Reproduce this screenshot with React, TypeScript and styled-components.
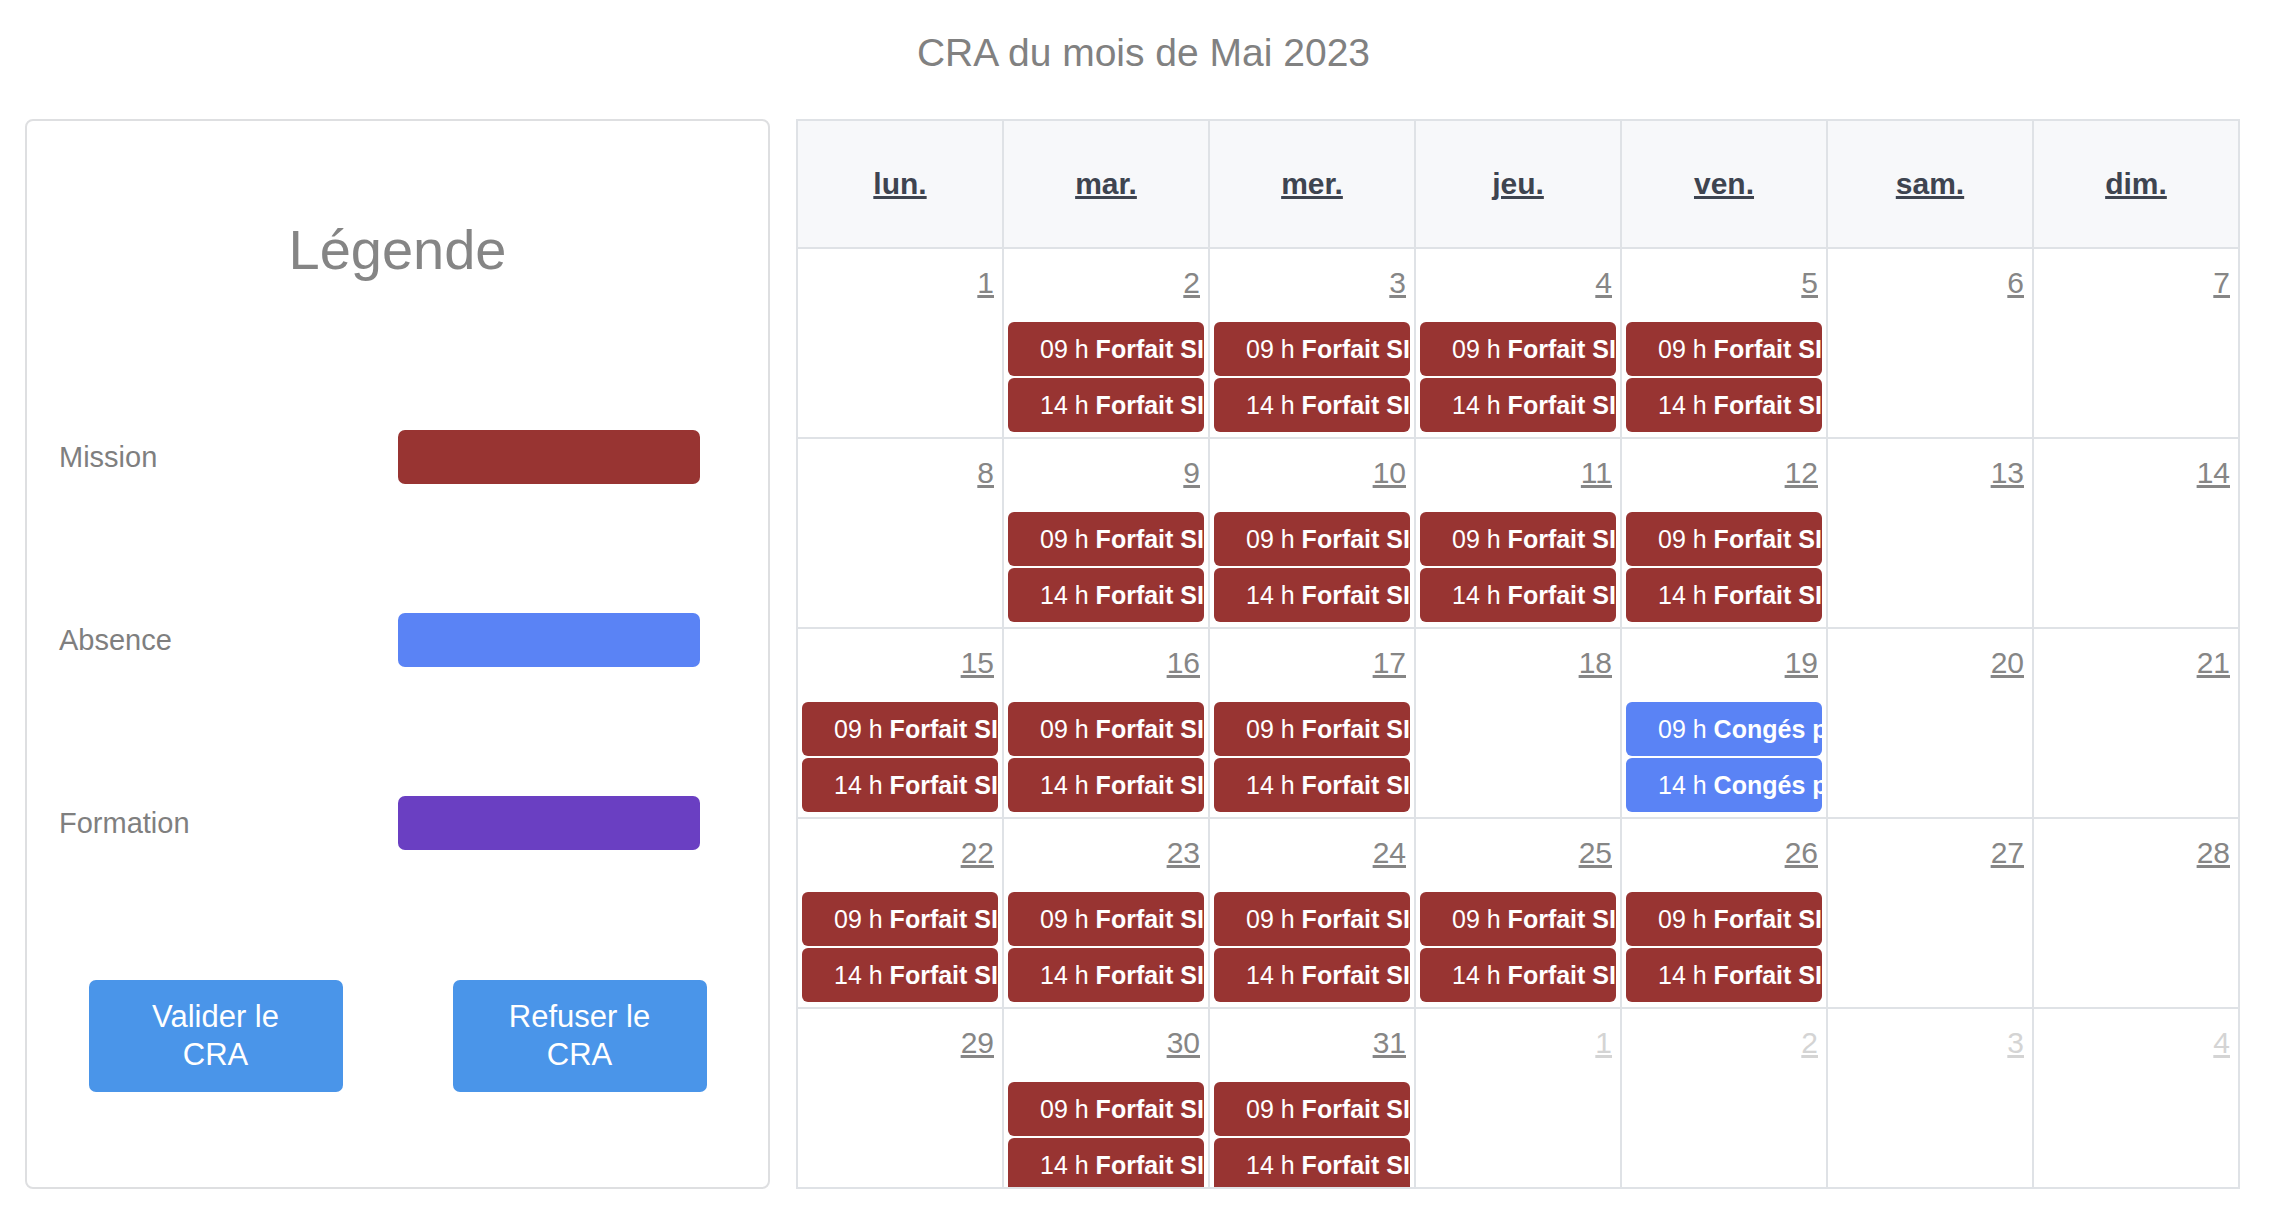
import React from 'react';
import styled, { createGlobalStyle } from 'styled-components';

const GlobalStyle = createGlobalStyle`
  html, body {
    margin: 0;
    padding: 0;
    background: #ffffff;
  }
  body {
    font-family: "Liberation Sans", Arial, Helvetica, sans-serif;
  }
`;

const Page = styled.div`
  width: 2274px;
  box-sizing: border-box;
  padding: 29px 34px 0 25px;
`;

const Title = styled.h1`
  margin: 0;
  padding-left: 22px;
  text-align: center;
  font-size: 39px;
  line-height: 47px;
  font-weight: 400;
  color: #818181;
`;

const Main = styled.div`
  display: flex;
  gap: 26px;
  margin-top: 43px;
  height: 1070px;
`;

const LegendPanel = styled.section`
  width: 745px;
  flex: none;
  box-sizing: border-box;
  border: 2px solid #dedfe1;
  border-radius: 8px;
  padding: 0 32px;
  display: flex;
  flex-direction: column;
`;

const LegendTitle = styled.h2`
  margin: 95px 0 0;
  text-align: center;
  font-size: 56px;
  line-height: 67px;
  font-weight: 400;
  color: #858585;
`;

const LegendList = styled.div`
  display: grid;
  grid-template-columns: 1fr 1fr;
  row-gap: 129px;
  margin-top: 147px;
`;

const LegendLabel = styled.span`
  align-self: center;
  font-size: 29px;
  color: #7f7f7f;
`;

const Swatch = styled.div<{ $color: string }>`
  width: 302px;
  height: 54px;
  border-radius: 7px;
  background: ${(p) => p.$color};
`;

const ButtonRow = styled.div`
  display: flex;
  justify-content: center;
  gap: 110px;
  margin-top: 130px;
`;

const ActionButton = styled.button`
  width: 254px;
  height: 112px;
  box-sizing: border-box;
  padding: 0 40px;
  border: none;
  border-radius: 7px;
  background: #4a95e9;
  color: #ffffff;
  font-family: "Liberation Sans", Arial, sans-serif;
  font-size: 31px;
  line-height: 38px;
  cursor: pointer;
`;

const CalendarFrame = styled.section`
  flex: 1;
  box-sizing: border-box;
  border-left: 2px solid #dfe2e6;
  border-top: 2px solid #dfe2e6;
  border-bottom: 2px solid #dfe2e6;
  overflow: hidden;
`;

const CalendarGrid = styled.div`
  display: grid;
  grid-template-columns: repeat(7, 1fr);
  grid-template-rows: 128px;
  grid-auto-rows: 190px;
`;

const HeaderCell = styled.div`
  box-sizing: border-box;
  background: #f7f8fa;
  border-right: 2px solid #dfe2e6;
  border-bottom: 2px solid #dfe2e6;
  display: flex;
  align-items: center;
  justify-content: center;
`;

const HeaderLink = styled.a`
  font-size: 30px;
  font-weight: 700;
  color: #3e4450;
  text-decoration: underline;
`;

const DayCell = styled.div`
  box-sizing: border-box;
  border-right: 2px solid #dfe2e6;
  border-bottom: 2px solid #dfe2e6;
  padding: 16px 4px 0;
  display: flex;
  flex-direction: column;
  min-width: 0;
`;

const DayNumber = styled.a<{ $muted?: boolean }>`
  align-self: flex-end;
  margin-right: 4px;
  font-size: 30px;
  line-height: 36px;
  color: ${(p) => (p.$muted ? '#d4d4d4' : '#868686')};
  text-decoration: underline;
`;

const EventList = styled.div`
  display: flex;
  flex-direction: column;
  gap: 2px;
  margin-top: 21px;
`;

const EventChip = styled.div<{ $color: string }>`
  height: 54px;
  box-sizing: border-box;
  padding-left: 32px;
  border-radius: 6px;
  background: ${(p) => p.$color};
  color: #ffffff;
  font-size: 25px;
  line-height: 54px;
  white-space: nowrap;
  overflow: hidden;
`;

const EventTitle = styled.b`
  font-weight: 700;
`;

const MISSION = '#983432';
const ABSENCE = '#5a83f5';
const FORMATION = '#6a3fc2';

type Kind = 'mission' | 'absence' | null;

interface Day {
  n: number;
  muted?: boolean;
  kind: Kind;
}

const missionDays = new Set([2, 3, 4, 5, 9, 10, 11, 12, 15, 16, 17, 22, 23, 24, 25, 26, 30, 31]);

const days: Day[] = [];
for (let d = 1; d <= 31; d++) {
  days.push({ n: d, kind: missionDays.has(d) ? 'mission' : d === 19 ? 'absence' : null });
}
for (let d = 1; d <= 4; d++) {
  days.push({ n: d, muted: true, kind: null });
}

const weekdays = ['lun.', 'mar.', 'mer.', 'jeu.', 'ven.', 'sam.', 'dim.'];

const legend = [
  { label: 'Mission', color: MISSION },
  { label: 'Absence', color: ABSENCE },
  { label: 'Formation', color: FORMATION },
];

function DayEvents({ kind }: { kind: Kind }) {
  if (!kind) return null;
  const color = kind === 'mission' ? MISSION : ABSENCE;
  const title = kind === 'mission' ? 'Forfait SIRH' : 'Congés payés';
  return (
    <EventList>
      {['09', '14'].map((h) => (
        <EventChip key={h} $color={color}>
          {h} h <EventTitle>{title}</EventTitle>
        </EventChip>
      ))}
    </EventList>
  );
}

export default function App() {
  return (
    <>
      <GlobalStyle />
      <Page>
        <Title>CRA du mois de Mai 2023</Title>
        <Main>
          <LegendPanel>
            <LegendTitle>Légende</LegendTitle>
            <LegendList>
              {legend.map((l) => (
                <React.Fragment key={l.label}>
                  <LegendLabel>{l.label}</LegendLabel>
                  <Swatch $color={l.color} />
                </React.Fragment>
              ))}
            </LegendList>
            <ButtonRow>
              <ActionButton>Valider le CRA</ActionButton>
              <ActionButton>Refuser le CRA</ActionButton>
            </ButtonRow>
          </LegendPanel>
          <CalendarFrame>
            <CalendarGrid>
              {weekdays.map((w) => (
                <HeaderCell key={w}>
                  <HeaderLink>{w}</HeaderLink>
                </HeaderCell>
              ))}
              {days.map((d, i) => (
                <DayCell key={i}>
                  <DayNumber $muted={d.muted}>{d.n}</DayNumber>
                  <DayEvents kind={d.kind} />
                </DayCell>
              ))}
            </CalendarGrid>
          </CalendarFrame>
        </Main>
      </Page>
    </>
  );
}
